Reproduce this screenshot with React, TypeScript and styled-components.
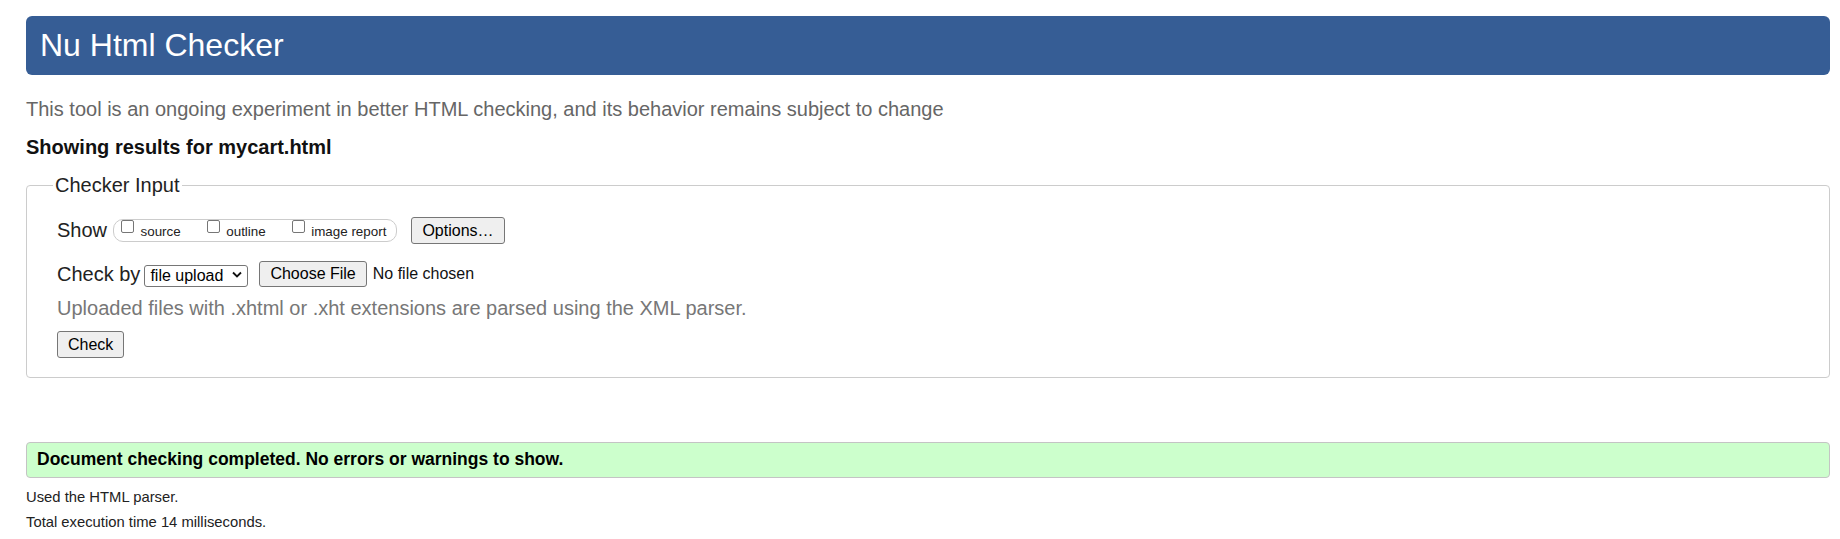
import React from "react";
import styled, { createGlobalStyle } from "styled-components";

const GlobalStyle = createGlobalStyle`
  html, body { margin: 0; padding: 0; background: #fff; overflow: hidden; }
  body { font-family: "Liberation Sans", Arial, Helvetica, sans-serif; color: #222; }
  * { box-sizing: border-box; }
`;

const Page = styled.div`
  padding: 16px 10px 0 26px;
  font-size: 20px;
`;

const Banner = styled.h1`
  margin: 0;
  background: #365d95;
  color: #fff;
  font-weight: normal;
  font-size: 32px;
  line-height: 37px;
  padding: 11px 14px;
  border-radius: 6px;
`;

const Tagline = styled.p`
  margin: 23px 0 0;
  color: #666;
  line-height: 23px;
`;

const ResultsHeading = styled.h2`
  margin: 15px 0 0;
  font-size: 20px;
  font-weight: bold;
  line-height: 23px;
  color: #111;
`;

const InputFieldset = styled.fieldset`
  margin: 15px 0 0;
  padding: 20px 30px 19px;
  border: 1px solid #ccc;
  border-radius: 4px;
  min-inline-size: 0;
`;

const Legend = styled.legend`
  margin-left: -4px;
  padding: 0 2px;
  font-size: 20px;
  line-height: 23px;
  color: #222;
`;

const ControlRow = styled.div<{ $top?: number; $height?: number }>`
  display: flex;
  align-items: center;
  margin-top: ${(p) => p.$top ?? 0}px;
  height: ${(p) => p.$height ?? 27}px;
`;

const RowLabel = styled.span`
  font-size: 20px;
  line-height: 23px;
  color: #222;
`;

const ShowGroup = styled.div`
  display: flex;
  align-items: flex-start;
  height: 23px;
  margin-left: 6px;
  padding: 0 10px 0 3px;
  border: 1px solid #ccc;
  border-radius: 10px;
`;

const OptionLabel = styled.label`
  display: flex;
  align-items: flex-start;
  &:not(:last-child) {
    margin-right: 22px;
  }
`;

const CheckBox = styled.input`
  appearance: none;
  -webkit-appearance: none;
  width: 13px;
  height: 13px;
  margin: 0 6.5px 0 4px;
  border: 1px solid #767676;
  border-radius: 2px;
  background: #fff;
`;

const OptionText = styled.span`
  font-size: 13.4px;
  line-height: 15px;
  margin-top: 4px;
  color: #222;
`;

const Button = styled.button<{ $gap?: number; $height?: number }>`
  font-family: inherit;
  font-size: 16px;
  color: #000;
  height: ${(p) => p.$height ?? 27}px;
  margin: 0 0 0 ${(p) => p.$gap ?? 0}px;
  padding: 0 10px;
  background: #efefef;
  border: 1px solid #767676;
  border-radius: 3px;
  line-height: 18px;
`;

const SelectWrap = styled.div`
  position: relative;
  margin-left: 4px;
  width: 104px;
  height: 22px;
`;

const Select = styled.select`
  appearance: none;
  -webkit-appearance: none;
  width: 100%;
  height: 100%;
  font-family: inherit;
  font-size: 16px;
  color: #000;
  padding: 0 0 0 5px;
  border: 1px solid #767676;
  border-radius: 3px;
  background: #fff;
`;

const Chevron = styled.svg`
  position: absolute;
  left: 88px;
  top: 8px;
  pointer-events: none;
`;

const FileStatus = styled.span`
  margin-left: 6px;
  font-size: 16px;
  line-height: 18px;
  color: #111;
`;

const Hint = styled.p`
  margin: 10px 0 0;
  color: #777;
  line-height: 23px;
`;

const SuccessBox = styled.div`
  margin-top: 64px;
  background: #ccffcc;
  border: 1px solid #c4c4c4;
  border-radius: 4px;
  padding: 6px 10px 8px;
  font-weight: bold;
  font-size: 17.5px;
  line-height: 20px;
  color: #000;
`;

const StatLine = styled.p<{ $top: number }>`
  margin: ${(p) => p.$top}px 0 0;
  font-size: 14.8px;
  line-height: 17px;
  color: #222;
`;

export default function App() {
  return (
    <>
      <GlobalStyle />
      <Page>
        <Banner>Nu Html Checker</Banner>
        <Tagline>
          This tool is an ongoing experiment in better HTML checking, and its behavior remains subject to change
        </Tagline>
        <ResultsHeading>Showing results for mycart.html</ResultsHeading>
        <InputFieldset>
          <Legend>Checker Input</Legend>
          <ControlRow>
            <RowLabel>Show</RowLabel>
            <ShowGroup>
              <OptionLabel>
                <CheckBox type="checkbox" />
                <OptionText>source</OptionText>
              </OptionLabel>
              <OptionLabel>
                <CheckBox type="checkbox" />
                <OptionText>outline</OptionText>
              </OptionLabel>
              <OptionLabel>
                <CheckBox type="checkbox" />
                <OptionText>image report</OptionText>
              </OptionLabel>
            </ShowGroup>
            <Button $gap={14}>Options…</Button>
          </ControlRow>
          <ControlRow $top={17} $height={26}>
            <RowLabel>Check by</RowLabel>
            <SelectWrap>
              <Select defaultValue="file">
                <option value="address">address</option>
                <option value="file">file upload</option>
                <option value="text">text input</option>
              </Select>
              <Chevron width="10" height="7" viewBox="0 0 10 7">
                <polyline points="1,1.5 5,5.5 9,1.5" fill="none" stroke="#111" strokeWidth="1.8" />
              </Chevron>
            </SelectWrap>
            <Button $gap={11} $height={26}>Choose File</Button>
            <FileStatus>No file chosen</FileStatus>
          </ControlRow>
          <Hint>Uploaded files with .xhtml or .xht extensions are parsed using the XML parser.</Hint>
          <ControlRow $top={11}>
            <Button>Check</Button>
          </ControlRow>
        </InputFieldset>
        <SuccessBox>Document checking completed. No errors or warnings to show.</SuccessBox>
        <StatLine $top={10.5}>Used the HTML parser.</StatLine>
        <StatLine $top={8}>Total execution time 14 milliseconds.</StatLine>
      </Page>
    </>
  );
}
